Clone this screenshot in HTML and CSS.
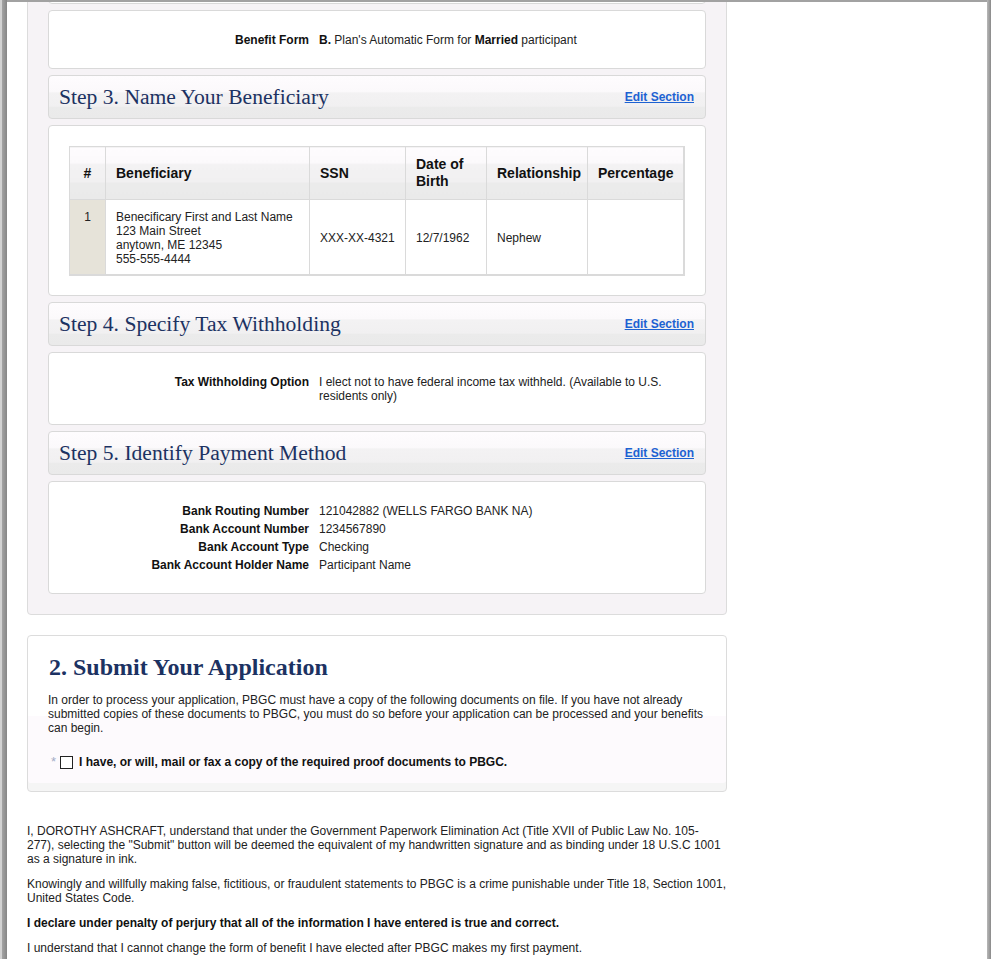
FILE: index.html
```html
<!DOCTYPE html>
<html lang="en">
<head>
  <meta charset="UTF-8" />
  <meta name="viewport" content="width=device-width, initial-scale=1.0" />
  <title>Review Your Application</title>
  <link rel="stylesheet" href="styles.css">
</head>
<body>
  <div class="window">
    <div class="content">
      <div class="review">
        <div class="panel panel-blank"></div>
        <div class="panel">
          <dl class="fields">
            <dt>Benefit Form</dt>
            <dd><b>B.</b> Plan's Automatic Form for <b>Married</b> participant</dd>
          </dl>
        </div>

        <div class="step-head">
          <h3>Step 3. Name Your Beneficiary</h3>
          <a href="#">Edit Section</a>
        </div>
        <div class="panel panel-table">
          <table class="beneficiaries">
            <thead>
              <tr>
                <th class="col-num">#</th>
                <th class="col-name">Beneficiary</th>
                <th class="col-ssn">SSN</th>
                <th class="col-dob">Date of Birth</th>
                <th class="col-rel">Relationship</th>
                <th class="col-pct">Percentage</th>
              </tr>
            </thead>
            <tbody>
              <tr>
                <td class="num">1</td>
                <td>Benecificary First and Last Name<br>123 Main Street<br>anytown, ME 12345<br>555-555-4444</td>
                <td>XXX-XX-4321</td>
                <td>12/7/1962</td>
                <td>Nephew</td>
                <td></td>
              </tr>
            </tbody>
          </table>
        </div>

        <div class="step-head">
          <h3>Step 4. Specify Tax Withholding</h3>
          <a href="#">Edit Section</a>
        </div>
        <div class="panel">
          <dl class="fields">
            <dt>Tax Withholding Option</dt>
            <dd>I elect not to have federal income tax withheld. (Available to U.S. residents only)</dd>
          </dl>
        </div>

        <div class="step-head">
          <h3>Step 5. Identify Payment Method</h3>
          <a href="#">Edit Section</a>
        </div>
        <div class="panel">
          <dl class="fields">
            <dt>Bank Routing Number</dt>
            <dd>121042882 (WELLS FARGO BANK NA)</dd>
            <dt>Bank Account Number</dt>
            <dd>1234567890</dd>
            <dt>Bank Account Type</dt>
            <dd>Checking</dd>
            <dt>Bank Account Holder Name</dt>
            <dd>Participant Name</dd>
          </dl>
        </div>
      </div>

      <div class="submit">
        <h2>2. Submit Your Application</h2>
        <p>In order to process your application, PBGC must have a copy of the following documents on file. If you have not already submitted copies of these documents to PBGC, you must do so before your application can be processed and your benefits can begin.</p>
        <label class="confirm">
          <span class="req">*</span>
          <span class="checkbox"></span>
          I have, or will, mail or fax a copy of the required proof documents to PBGC.
        </label>
      </div>

      <div class="declaration">
        <p>I, DOROTHY ASHCRAFT, understand that under the Government Paperwork Elimination Act (Title XVII of Public Law No. 105-<br>277), selecting the "Submit" button will be deemed the equivalent of my handwritten signature and as binding under 18 U.S.C 1001 as a signature in ink.</p>
        <p>Knowingly and willfully making false, fictitious, or fraudulent statements to PBGC is a crime punishable under Title 18, Section 1001, United States Code.</p>
        <p><b>I declare under penalty of perjury that all of the information I have entered is true and correct.</b></p>
        <p>I understand that I cannot change the form of benefit I have elected after PBGC makes my first payment.</p>
      </div>
    </div>
  </div>
</body>
</html>
```

FILE: styles.css
```css
* {
  box-sizing: border-box;
}
body {
  margin: 0;
  height: 959px;
  overflow: hidden;
  font-family: 'Liberation Sans', Arial, sans-serif;
  font-size: 12px;
  line-height: 14px;
  color: #222;
  background:
    linear-gradient(to right, #d2d2d2 0, #d2d2d2 2px, #a4a4a4 2px, #868686 7px) left top / 7px 100% no-repeat,
    linear-gradient(to right, #b8b8b8 0, #8a8a8a 4px) right top / 4px 100% no-repeat,
    #fff;
}
.window {
  margin: 0 4px 0 7px;
  height: 959px;
  border-top: 2px solid #a2a2a2;
  background: #fff;
  overflow: hidden;
}
.content {
  width: 740px;
  padding: 0 20px;
}
.review {
  margin-top: -79px;
  background: #f6f3f6;
  border: 1px solid #dcdcdc;
  border-radius: 4px;
  padding: 20px;
}
.panel {
  background: #fff;
  border: 1px solid #d9d9d9;
  border-radius: 4px;
  padding: 22px 20px 21px;
  margin-top: 6px;
}
.panel-blank {
  height: 60px;
  margin-top: 0;
}
.panel-table {
  padding: 20px 20px 19px;
}
.fields {
  display: grid;
  grid-template-columns: 240px 1fr;
  column-gap: 10px;
  row-gap: 4px;
  margin: 0;
}
.fields dt {
  font-weight: bold;
  color: #111;
  text-align: right;
}
.fields dd {
  margin: 0;
}
.fields b {
  color: #111;
}
.step-head {
  display: flex;
  justify-content: space-between;
  align-items: center;
  height: 44px;
  margin-top: 6px;
  padding: 0 11px 0 10px;
  border: 1px solid #d9d9d9;
  border-radius: 4px;
  background: linear-gradient(#fefcfe 0, #fbf9fb 38%, #f3f2f3 40%, #f1f0f1 72%, #ebebeb 74%, #eaeaea 100%);
}
.step-head h3 {
  margin: 0;
  font-family: 'Liberation Serif', 'Times New Roman', serif;
  font-size: 21.6px;
  font-weight: normal;
  line-height: 24px;
  color: #1c3262;
}
.step-head a {
  font-weight: bold;
  color: #1d62d2;
  text-decoration: underline;
}
.beneficiaries {
  width: 616px;
  table-layout: fixed;
  border-collapse: collapse;
  border: 1px solid #dadada;
  border-right-width: 2px;
  border-bottom-width: 2px;
}
.beneficiaries th,
.beneficiaries td {
  border: 1px solid #dadada;
  text-align: left;
}
.beneficiaries th {
  padding: 9px 10px;
  font-size: 14px;
  line-height: 17px;
  color: #111;
  background: linear-gradient(#fefcfe 0, #fbf9fb 30%, #f3f2f3 32%, #f1f0f1 66%, #ebebeb 68%, #eaeaea 100%);
}
.beneficiaries td {
  padding: 10px 10px 8px;
  vertical-align: middle;
}
.beneficiaries .col-num,
.beneficiaries .num {
  text-align: center;
}
.beneficiaries .num {
  vertical-align: top;
  background: #e6e3d9;
}
.col-num { width: 36px; }
.col-name { width: 204px; }
.col-ssn { width: 96px; }
.col-dob { width: 81px; }
.col-rel { width: 101px; }
.submit {
  margin-top: 20px;
  border: 1px solid #dcdcdc;
  border-radius: 4px;
  padding: 18px 20px 21px;
  background: linear-gradient(#fff 0, #fff 80px, #fdfafd 80px);
  box-shadow: inset 0 -8px 0 #f5f5f5;
}
.submit h2 {
  margin: 0 0 0 1px;
  font-family: 'Liberation Serif', 'Times New Roman', serif;
  font-size: 24px;
  line-height: 26px;
  color: #1c3262;
}
.submit p {
  margin: 13px 0 0;
}
.confirm {
  display: flex;
  align-items: center;
  margin-top: 19px;
  padding-left: 3px;
  font-weight: bold;
  color: #111;
  line-height: 16px;
}
.req {
  color: #a3acc6;
  font-weight: normal;
  font-size: 13px;
  margin-right: 4px;
}
.checkbox {
  width: 13px;
  height: 13px;
  border: 1px solid #222;
  background: #fff;
  margin-right: 6px;
}
.declaration {
  margin-top: 32px;
}
.declaration p {
  margin: 0 0 11px;
}
.declaration b {
  color: #111;
}
```
